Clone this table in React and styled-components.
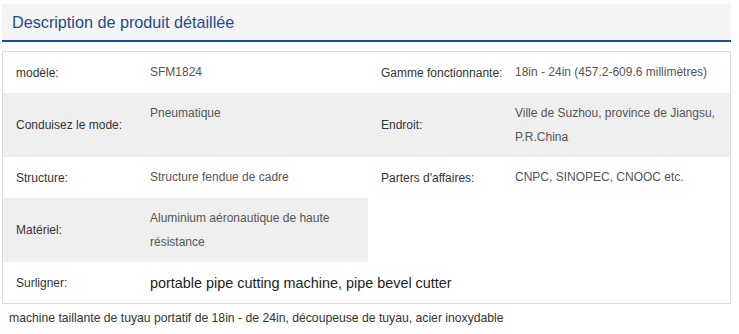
import React from "react"
import styled, { createGlobalStyle } from "styled-components"

const GlobalStyle = createGlobalStyle`
    body {
        margin: 0;
        background: #fff;
        font-family: "Liberation Sans", Arial, Helvetica, sans-serif;
    }
`

const Page = styled.div`
    width: 739px;
    padding: 4px 8px 0 2px;
    box-sizing: border-box;
`

const Header = styled.div`
    height: 36px;
    display: flex;
    align-items: center;
    padding-left: 10px;
    background: #f4f4f4;
    border-bottom: 2px solid #1b4a96;
`

const Title = styled.h2`
    margin: 0;
    font-size: 16.2px;
    font-weight: normal;
    color: #1f4b8e;
`

const Table = styled.div`
    margin-top: 9px;
    border: 1px solid #dcdcdc;
    display: flex;
    flex-direction: column;
`

const Row = styled.div`
    display: grid;
    grid-template-columns: ${p => (p.$full ? "1fr" : "365px 1fr")};
    min-height: 41px;
`

const Half = styled.div`
    display: grid;
    grid-template-columns: 147px 1fr;
    background: ${p => (p.$shaded ? "#efefef" : "#fff")};
`

const Label = styled.div`
    display: flex;
    align-items: center;
    padding-left: 13px;
    font-size: 12px;
    color: #333;
`

const Value = styled.div`
    display: flex;
    align-items: ${p => (p.$large ? "center" : "flex-start")};
    padding: 8px 14px 8px 0;
    font-size: ${p => (p.$large ? "14.4px" : "12px")};
    line-height: 24px;
    color: ${p => (p.$large ? "#222" : "#555")};
`

const Footer = styled.p`
    margin: 7px 0 0 7px;
    font-size: 12.2px;
    color: #333;
`

const rows = [
    { shaded: false, left: ["modèle:", "SFM1824"], right: ["Gamme fonctionnante:", "18in - 24in (457.2-609.6 millimètres)"] },
    { shaded: true, left: ["Conduisez le mode:", "Pneumatique"], right: ["Endroit:", "Ville de Suzhou, province de Jiangsu, P.R.China"] },
    { shaded: false, left: ["Structure:", "Structure fendue de cadre"], right: ["Parters d'affaires:", "CNPC, SINOPEC, CNOOC etc."] },
    { shaded: true, left: ["Matériel:", "Aluminium aéronautique de haute résistance"], right: null },
]

const Pair = ({ item, shaded }) => (
    <Half $shaded={shaded}>
        <Label>{item ? item[0] : ""}</Label>
        <Value>{item ? item[1] : ""}</Value>
    </Half>
)

export default function App() {
    return (
        <Page>
            <GlobalStyle />
            <Header>
                <Title>Description de produit détaillée</Title>
            </Header>
            <Table>
                {rows.map((r, i) => (
                    <Row key={i}>
                        <Pair item={r.left} shaded={r.shaded} />
                        <Pair item={r.right} shaded={r.shaded && r.right} />
                    </Row>
                ))}
                <Row $full>
                    <Half>
                        <Label>Surligner:</Label>
                        <Value $large>portable pipe cutting machine, pipe bevel cutter</Value>
                    </Half>
                </Row>
            </Table>
            <Footer>machine taillante de tuyau portatif de 18in - de 24in, découpeuse de tuyau, acier inoxydable</Footer>
        </Page>
    )
}
